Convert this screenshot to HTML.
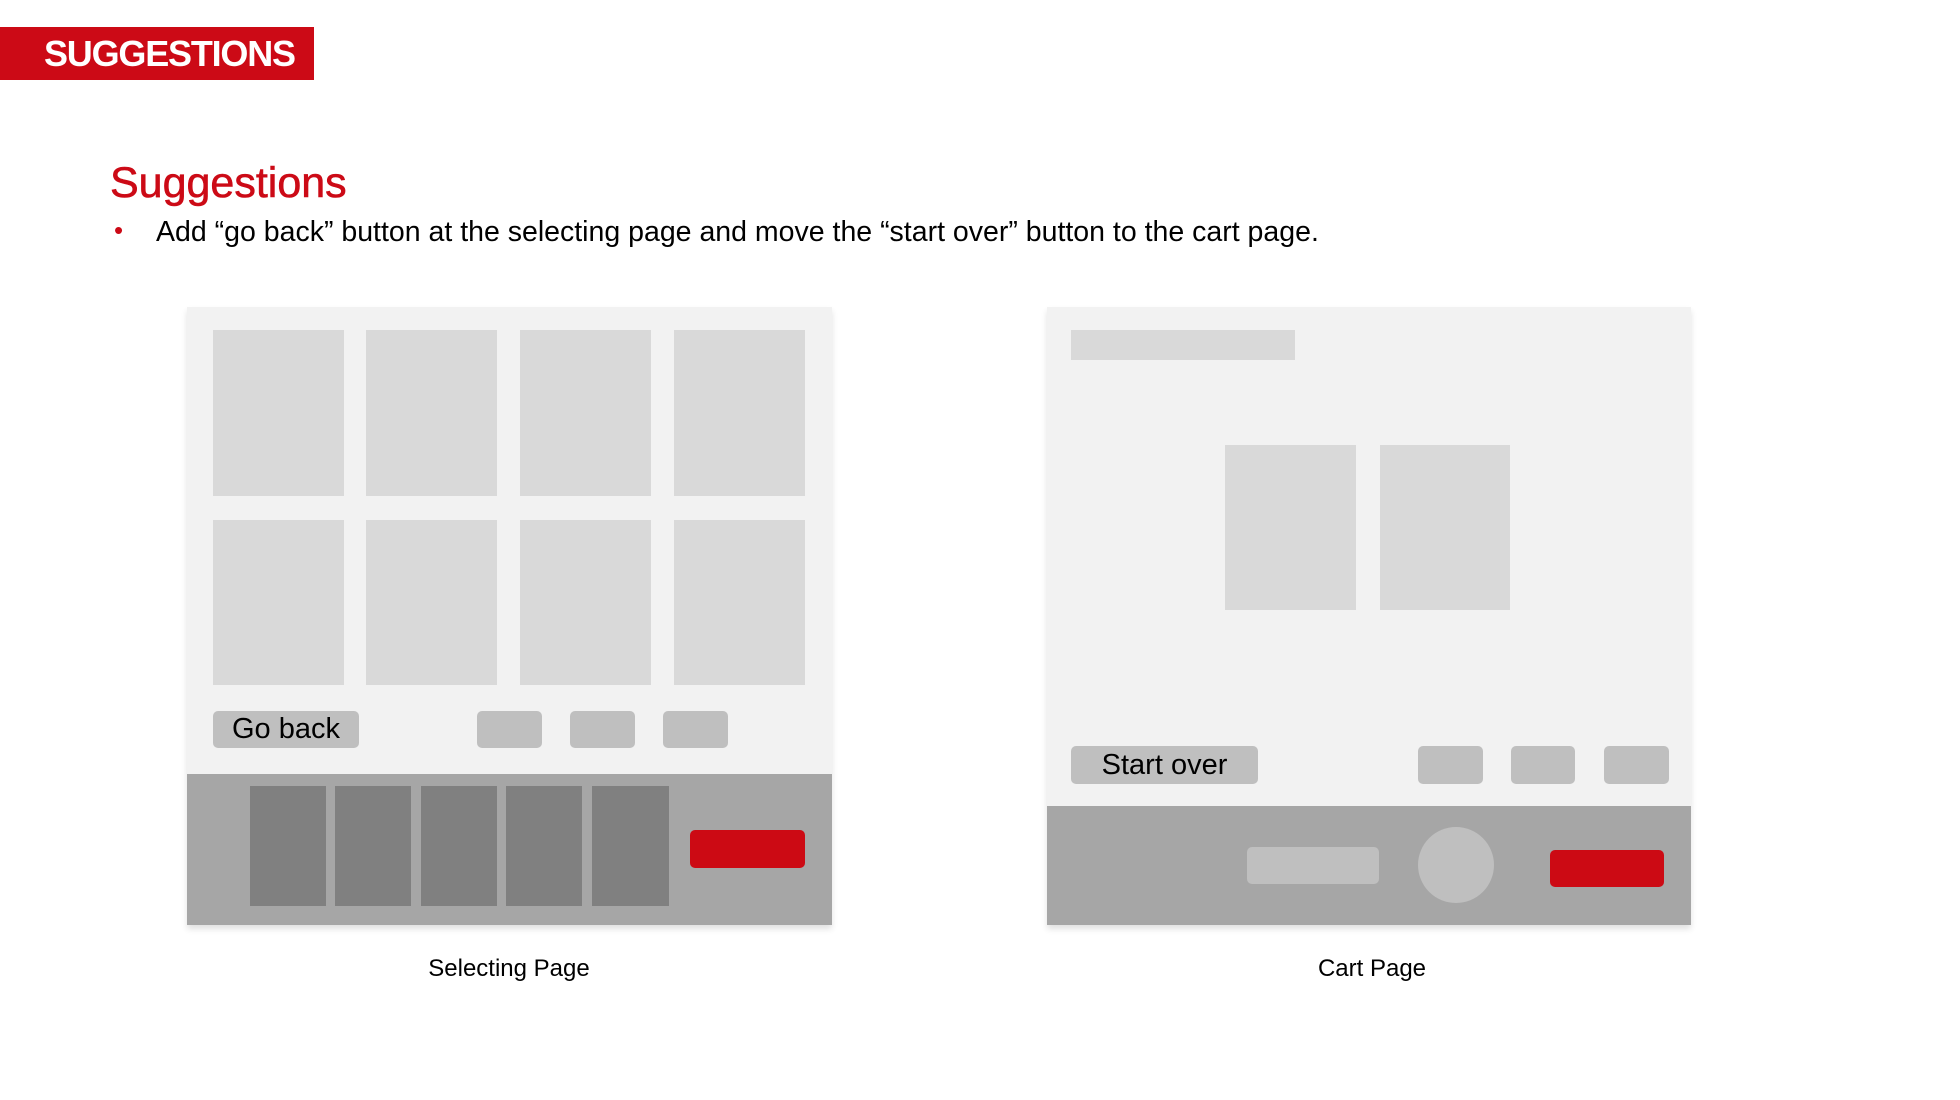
<!DOCTYPE html>
<html><head><meta charset="utf-8"><style>
*{margin:0;padding:0;box-sizing:border-box}
body{width:1960px;height:1100px;background:#fff;position:relative;overflow:hidden;font-family:"Liberation Sans",Arial,sans-serif}
.a{position:absolute}
.banner{left:0;top:27px;width:314px;height:53px;background:#cc0a16;color:#fff;font-weight:bold;font-size:36px;line-height:53px;padding-left:44px;letter-spacing:-1.2px}
.h{left:110px;top:158px;font-size:43px;color:#cc0a16;line-height:50px;-webkit-text-stroke:0.6px #cc0a16}
.b{left:114px;top:216px;font-size:28.5px;color:#000;line-height:32px}
.b span{color:#cc0a16;position:absolute;left:0;top:-2px;font-size:26px}
.b div{margin-left:42px;white-space:nowrap}
.card{background:#f2f2f2;box-shadow:0 4px 6px rgba(0,0,0,0.12)}
.t{background:#d9d9d9}
.btn{background:#bfbfbf;border-radius:5px}
.dk{background:#808080}
.bar{background:#a6a6a6}
.red{background:#cc0a14;border-radius:5px}
.lbl{font-size:24px;color:#000;text-align:center;width:400px}
</style></head><body>
<div class="a banner">SUGGESTIONS</div>
<div class="a h">Suggestions</div>
<div class="a b"><span>•</span><div>Add “go back” button at the selecting page and move the “start over” button to the cart page.</div></div>

<div class="a card" style="left:187px;top:307px;width:645px;height:618px"></div>
<div class="a t" style="left:213px;top:330px;width:131px;height:166px"></div>
<div class="a t" style="left:366px;top:330px;width:131px;height:166px"></div>
<div class="a t" style="left:520px;top:330px;width:131px;height:166px"></div>
<div class="a t" style="left:674px;top:330px;width:131px;height:166px"></div>
<div class="a t" style="left:213px;top:520px;width:131px;height:165px"></div>
<div class="a t" style="left:366px;top:520px;width:131px;height:165px"></div>
<div class="a t" style="left:520px;top:520px;width:131px;height:165px"></div>
<div class="a t" style="left:674px;top:520px;width:131px;height:165px"></div>
<div class="a btn" style="left:213px;top:711px;width:146px;height:37px;font-size:29px;line-height:37px;text-align:center">Go back</div>
<div class="a btn" style="left:477px;top:711px;width:65px;height:37px"></div>
<div class="a btn" style="left:570px;top:711px;width:65px;height:37px"></div>
<div class="a btn" style="left:663px;top:711px;width:65px;height:37px"></div>
<div class="a bar" style="left:187px;top:774px;width:645px;height:151px"></div>
<div class="a dk" style="left:250px;top:786px;width:76px;height:120px"></div>
<div class="a dk" style="left:335px;top:786px;width:76px;height:120px"></div>
<div class="a dk" style="left:421px;top:786px;width:76px;height:120px"></div>
<div class="a dk" style="left:506px;top:786px;width:76px;height:120px"></div>
<div class="a dk" style="left:592px;top:786px;width:77px;height:120px"></div>
<div class="a red" style="left:690px;top:830px;width:115px;height:38px"></div>
<div class="a lbl" style="left:309px;top:955px">Selecting Page</div>

<div class="a card" style="left:1047px;top:307px;width:644px;height:618px"></div>
<div class="a t" style="left:1071px;top:330px;width:224px;height:30px"></div>
<div class="a t" style="left:1225px;top:445px;width:131px;height:165px"></div>
<div class="a t" style="left:1380px;top:445px;width:130px;height:165px"></div>
<div class="a btn" style="left:1071px;top:746px;width:187px;height:38px;font-size:29px;line-height:38px;text-align:center">Start over</div>
<div class="a btn" style="left:1418px;top:746px;width:65px;height:38px"></div>
<div class="a btn" style="left:1511px;top:746px;width:64px;height:38px"></div>
<div class="a btn" style="left:1604px;top:746px;width:65px;height:38px"></div>
<div class="a bar" style="left:1047px;top:806px;width:644px;height:119px"></div>
<div class="a" style="left:1247px;top:847px;width:132px;height:37px;background:#bfbfbf;border-radius:5px"></div>
<div class="a" style="left:1418px;top:827px;width:76px;height:76px;background:#bfbfbf;border-radius:50%"></div>
<div class="a red" style="left:1550px;top:850px;width:114px;height:37px"></div>
<div class="a lbl" style="left:1172px;top:955px">Cart Page</div>
</body></html>
